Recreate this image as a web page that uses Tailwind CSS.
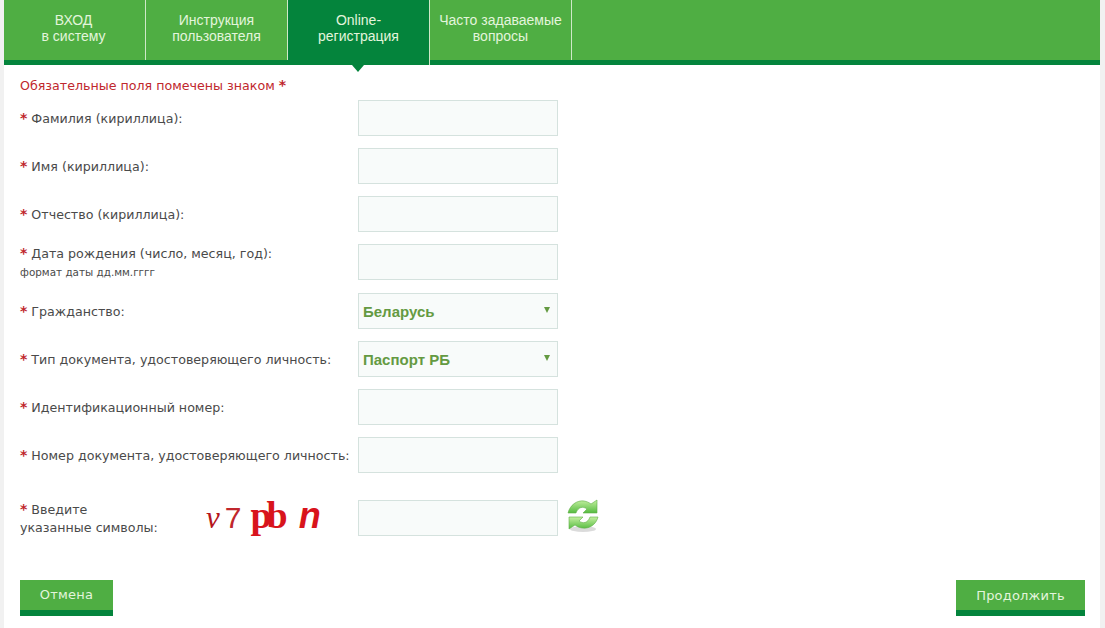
<!DOCTYPE html>
<html lang="ru">
<head>
<meta charset="UTF-8">
<title>Online-регистрация</title>
<script src="https://cdn.jsdelivr.net/npm/@tailwindcss/browser@4"></script>
</head>
<body class="bg-[#f1f1f1] font-['DejaVu_Sans',sans-serif] text-[12.65px] text-[#4a4a4a]">
<div class="ml-[4px] mr-[5px] h-[628px] overflow-hidden bg-white">
  <!-- tabs -->
  <nav class="flex h-[65px] border-b-[5px] border-[#04843c] bg-[#4fae43] font-['Liberation_Sans',sans-serif] text-[14px] leading-[16px] text-[#e3f5dc]">
    <a class="flex w-[142px] justify-center border-r border-[#cfe8c8] pt-[12px] pr-[2px] text-center">ВХОД<br>в систему</a>
    <a class="flex w-[142px] justify-center border-r border-[#cfe8c8] pt-[12px] text-center">Инструкция<br>пользователя</a>
    <a class="relative -mb-[5px] flex w-[142px] justify-center border-r border-[#cfe8c8] bg-[#04843c] pt-[12px] text-center">Online-<br>регистрация
      <span class="absolute left-[64px] top-[65px] h-0 w-0 border-x-[6px] border-t-[7px] border-x-transparent border-t-[#04843c]"></span>
    </a>
    <a class="flex w-[142px] justify-center border-r border-[#cfe8c8] pt-[12px] text-center">Часто задаваемые<br>вопросы</a>
  </nav>

  <form class="px-[16px]">
    <p class="mt-[13px] h-[22px] leading-[15px] text-[#c0272d]">Обязательные поля помечены знаком <b class="text-[14px] text-[#c0272d]">*</b></p>

    <div class="flex h-[36px] items-center">
      <label class="w-[338px]"><b class="text-[14px] text-[#c0272d]">*</b> Фамилия (кириллица):</label>
      <input class="h-[36px] w-[200px] border border-[#d5e2de] bg-[#f8fbfa]">
    </div>
    <div class="mt-[12px] flex h-[36px] items-center">
      <label class="w-[338px]"><b class="text-[14px] text-[#c0272d]">*</b> Имя (кириллица):</label>
      <input class="h-[36px] w-[200px] border border-[#d5e2de] bg-[#f8fbfa]">
    </div>
    <div class="mt-[12px] flex h-[36px] items-center">
      <label class="w-[338px]"><b class="text-[14px] text-[#c0272d]">*</b> Отчество (кириллица):</label>
      <input class="h-[36px] w-[200px] border border-[#d5e2de] bg-[#f8fbfa]">
    </div>
    <div class="mt-[12px] flex h-[36px] items-start">
      <label class="w-[338px] leading-[18px]"><b class="text-[14px] leading-[18px] text-[#c0272d]">*</b> Дата рождения (число, месяц, год):<span class="block text-[10.4px] leading-[18px]">формат даты дд.мм.гггг</span></label>
      <input class="h-[36px] w-[200px] border border-[#d5e2de] bg-[#f8fbfa]">
    </div>
    <div class="mt-[13px] flex h-[36px] items-center">
      <label class="w-[338px]"><b class="text-[14px] text-[#c0272d]">*</b> Гражданство:</label>
      <div class="relative flex h-[36px] w-[200px] items-center border border-[#d5e2de] bg-[#f8fbfa] pl-[4px] pt-[2px] font-['Liberation_Sans',sans-serif] text-[15px] font-bold text-[#649a42]">Беларусь
        <span class="absolute right-[7px] top-[13px] h-0 w-0 border-x-[3px] border-t-[6px] border-x-transparent border-t-[#649a42]"></span>
      </div>
    </div>
    <div class="mt-[12px] flex h-[36px] items-center">
      <label class="w-[338px]"><b class="text-[14px] text-[#c0272d]">*</b> Тип документа, удостоверяющего личность:</label>
      <div class="relative flex h-[36px] w-[200px] items-center border border-[#d5e2de] bg-[#f8fbfa] pl-[4px] pt-[2px] font-['Liberation_Sans',sans-serif] text-[15px] font-bold text-[#649a42]">Паспорт РБ
        <span class="absolute right-[7px] top-[13px] h-0 w-0 border-x-[3px] border-t-[6px] border-x-transparent border-t-[#649a42]"></span>
      </div>
    </div>
    <div class="mt-[12px] flex h-[36px] items-center">
      <label class="w-[338px]"><b class="text-[14px] text-[#c0272d]">*</b> Идентификационный номер:</label>
      <input class="h-[36px] w-[200px] border border-[#d5e2de] bg-[#f8fbfa]">
    </div>
    <div class="mt-[12px] flex h-[36px] items-center">
      <label class="w-[338px] whitespace-nowrap"><b class="text-[14px] text-[#c0272d]">*</b> Номер документа, удостоверяющего личность:</label>
      <input class="h-[36px] w-[200px] border border-[#d5e2de] bg-[#f8fbfa]">
    </div>

    <div class="mt-[27px] flex h-[36px] items-center">
      <label class="w-[186px] leading-[18px]"><b class="text-[14px] leading-[18px] text-[#c0272d]">*</b> Введите<br>указанные символы:</label>
      <div class="flex w-[152px] items-baseline pb-[3px] font-['Liberation_Serif',serif] text-[#d8141c]">
        <span class="text-[31px] leading-[36px] italic text-[#b5161c]">v</span><span class="ml-[5px] font-['Liberation_Sans',sans-serif] text-[30px] leading-[36px] text-[#c0272d]">7</span><span class="ml-[9px] text-[38px] leading-[36px] font-bold tracking-[-5px]">pb</span><span class="ml-[16px] font-['Liberation_Sans',sans-serif] text-[36px] leading-[36px] font-bold italic">n</span>
      </div>
      <input class="h-[36px] w-[200px] border border-[#d5e2de] bg-[#f8fbfa]">
      <svg class="mb-[4px] ml-[9px] h-[34px] w-[32px]" viewBox="0 0 32 34" aria-hidden="true">
        <defs>
          <linearGradient id="g" x1="0" y1="0" x2="0" y2="1">
            <stop offset="0" stop-color="#c4f0a0"/>
            <stop offset="1" stop-color="#55bb40"/>
          </linearGradient>
        </defs>
        <ellipse cx="16" cy="30" rx="13" ry="3" fill="#999" opacity=".35"/>
        <path d="M1 14C3 6 10 1 17 2c3 .5 5 1.500 7 3l6-4v13H16l4-4c-4-3-9-2-11 4H1Z" fill="url(#g)" stroke="#5fae48" stroke-width=".6"/>
        <path d="M31 18c-2 8-9 12-16 11-3-.5-5-1.500-7-3l-6 4V18h14l-4 4c4 3 9 2 11-4h8Z" fill="url(#g)" stroke="#5fae48" stroke-width=".6"/>
      </svg>
    </div>

    <div class="mt-[44px] flex justify-between">
      <button type="button" class="h-[36px] w-[93px] border-b-[6px] border-[#04843c] bg-[#4fae43] text-[13px] tracking-[0.2px] text-[#e3f5dc]">Отмена</button>
      <button type="button" class="mr-[-1px] h-[36px] w-[129px] border-b-[6px] border-[#04843c] bg-[#4fae43] pt-[1px] text-[13px] tracking-[0.2px] text-[#e3f5dc]">Продолжить</button>
    </div>
  </form>
</div>
</body>
</html>
